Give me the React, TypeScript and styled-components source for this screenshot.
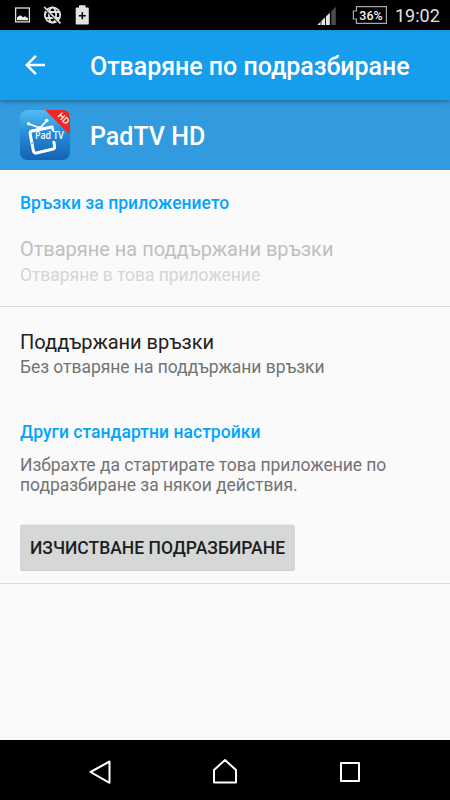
import React from "react";
import styled, { createGlobalStyle } from "styled-components";

const GlobalStyle = createGlobalStyle`
  * { box-sizing: border-box; }
  body { margin: 0; background: #fafafa; font-family: Roboto, "Noto Sans", sans-serif; }
`;

const Screen = styled.div`
  width: 450px;
  height: 800px;
  display: flex;
  flex-direction: column;
  background: #fafafa;
  overflow: hidden;
`;

const StatusBar = styled.header`
  height: 30px;
  flex: none;
  display: flex;
  justify-content: space-between;
  background: #000;
`;

const StatusGroup = styled.div`
  display: flex;
  height: 30px;
`;

const Clock = styled.time`
  width: 55px;
  font-size: 18px;
  line-height: 31px;
  color: #e2e2e2;
  white-space: nowrap;
`;

const AppBar = styled.div`
  height: 70px;
  flex: none;
  display: flex;
  align-items: center;
  gap: 40px;
  padding: 0 20px;
  background: #169dec;
  box-shadow: inset 0 1px 0 #1593dc, 0 1px 5px rgba(0, 0, 0, 0.4);
  z-index: 1;
`;

const BackButton = styled.button`
  display: flex;
  width: 30px;
  height: 30px;
  padding: 0;
  border: 0;
  background: none;
`;

const AppHeader = styled.div`
  height: 70px;
  flex: none;
  display: flex;
  align-items: center;
  gap: 20px;
  padding: 0 20px;
  background: #329bdf;
`;

const Heading = styled.h1<{ $spacing?: number }>`
  margin: 3px 0 0;
  font-size: 25px;
  line-height: 31px;
  font-weight: 500;
  letter-spacing: ${(p) => p.$spacing ?? 0}px;
  color: #fff;
  white-space: nowrap;
`;

const Content = styled.main`
  flex: 1;
`;

const SectionTitle = styled.h2<{ $top: number }>`
  margin: 0;
  padding: ${(p) => p.$top}px 20px 0;
  font-size: 17.5px;
  line-height: 20px;
  font-weight: 500;
  letter-spacing: 0.04px;
  color: #03a5fc;
`;

const Preference = styled.section<{ $disabled?: boolean; $height: number; $top: number }>`
  height: ${(p) => p.$height}px;
  padding: ${(p) => p.$top}px 20px 0;
  color: ${(p) => (p.$disabled ? "#bfbfbf" : "#212121")};
  border-bottom: ${(p) => (p.$disabled ? "1px solid #d9d9d9" : "0")};
`;

const PreferenceTitle = styled.h3`
  margin: 0;
  font-size: 20px;
  line-height: 29px;
  font-weight: 400;
  letter-spacing: -0.02px;
`;

const Summary = styled.p<{ $disabled?: boolean }>`
  margin: 0;
  font-size: 17.5px;
  line-height: ${(p) => (p.$disabled ? "22px" : "20px")};
  letter-spacing: -0.045px;
  color: ${(p) => (p.$disabled ? "#d5d5d5" : "#737373")};
`;

const Defaults = styled.section`
  height: 142px;
  padding: 13px 20px 0;
  border-bottom: 1px solid #dcdcdc;
`;

const ClearButton = styled.button`
  display: block;
  width: 275px;
  height: 46px;
  margin-top: 30px;
  padding: 0;
  border: 0;
  border-radius: 3px;
  background: #d6d8d7;
  box-shadow: 0 -0.5px 0 #d6d8d7, inset 0 -1px 0 #cbcdcc;
  color: #1d1e1e;
  font: 500 17.5px/46px Roboto, "Noto Sans", sans-serif;
  white-space: nowrap;
`;

const NavBar = styled.nav`
  height: 60px;
  flex: none;
  display: flex;
  align-items: center;
  justify-content: center;
  gap: 85px;
  padding-top: 4px;
  background: #000;
`;

const NavButton = styled.button`
  width: 40px;
  height: 40px;
  padding: 0;
  border: 0;
  background: none;
  display: block;
  svg { display: block; }
`;

const NotificationIcons = () => (
  <svg width="100" height="30" viewBox="0 0 100 30">
    <rect x="15.6" y="8" width="13.8" height="13.9" fill="none" stroke="#dedede" strokeWidth="1.3" />
    <path d="M17 20.2v-3l3.5-2 2.5 2 2-1 3 2v2z" fill="#ededed" />
    <g fill="none" stroke="#e0e0e0" strokeWidth="1.8">
      <circle cx="52.5" cy="15" r="7.7" />
      <ellipse cx="52.5" cy="15" rx="3.6" ry="7.7" />
      <path d="M45.5 12h14M45.5 18h14" />
    </g>
    <path d="M45 8.9L59.5 23.4" stroke="#000" strokeWidth="2" />
    <path d="M44.2 7L60.5 23.3" stroke="#e0e0e0" strokeWidth="1.7" />
    <path d="M76.5 7.5H79V5.2h6.5v2.3H88a.8.8 0 0 1 .8.8v15.4a.8.8 0 0 1-.8.8H76.5a.8.8 0 0 1-.8-.8V8.3a.8.8 0 0 1 .8-.8z" fill="#e2e2e2" />
    <path d="M82.3 12.2v7M78.8 15.7h7" stroke="#000" strokeWidth="1.6" />
  </svg>
);

const BatteryLabel = styled.text`
  font: 500 12.5px Roboto, sans-serif;
  fill: #f2f2f2;
`;

const SystemIcons = () => (
  <svg width="80" height="30" viewBox="315 0 80 30">
    <path d="M317.3 25l3.3-3.3V25zM321.4 25v-4.1l3.7-3.7V25zM326 25v-8.5l3.8-3.8V25z" fill="#e6e6e6" />
    <path d="M331.3 25V11.3l4.5-4.5V25z" fill="#4b4b4b" />
    <path d="M356.4 6.6h30v16.8h-30v-4.4h-3v-8h3z" fill="none" stroke="#a9a9a9" strokeWidth="1.2" />
    <BatteryLabel x="359.2" y="19.5" textLength="23.6">36%</BatteryLabel>
  </svg>
);

const LogoText = styled.text<{ $size: number }>`
  font: 600 ${(p) => p.$size}px "Open Sans", sans-serif;
  fill: #fff;
`;

const AppLogo = () => (
  <svg width="50" height="50" viewBox="0 0 50 50" overflow="visible">
    <defs>
      <linearGradient id="tile" x1="0" y1="0" x2="0" y2="1">
        <stop offset="0" stopColor="#50bdf2" />
        <stop offset=".5" stopColor="#2489d6" />
        <stop offset="1" stopColor="#1462b4" />
      </linearGradient>
    </defs>
    <rect width="50" height="50" rx="7.5" fill="url(#tile)" />
    <path d="M25 0H42.5Q50 0 50 7.5V25z" fill="#ed2827" />
    <g fill="none" stroke="#fff" strokeLinecap="round" strokeLinejoin="round">
      <path d="M8.6 13.8L20 18l6.8-7.4" strokeWidth="1.7" />
      <path d="M32 17L11.8 21Q9.8 21.6 10.2 24l3.2 17q.7 2.3 3 2L33 39q2-.7 1.6-2.8l-.7-4" strokeWidth="3" />
    </g>
    <circle cx="8.6" cy="13.8" r="1.7" fill="#fff" />
    <circle cx="26.8" cy="10.4" r="1.7" fill="#fff" />
    <path d="M15.5 19q3-4.5 8.5-2z" fill="#fff" />
    <path d="M32.2 17l.8 3.2" stroke="#fff" strokeWidth="2.4" strokeLinecap="round" />
    <circle cx="12.1" cy="33" r=".8" fill="#176fb5" />
    <LogoText $size={10} x="15" y="29.2" textLength="28.7" lengthAdjust="spacingAndGlyphs">Pad TV</LogoText>
    <LogoText $size={9} x="37" y="6.2" transform="rotate(45 37 6.2)" textLength="12.5" lengthAdjust="spacingAndGlyphs">HD</LogoText>
  </svg>
);

export default function App() {
  return (
    <Screen>
      <GlobalStyle />
      <StatusBar>
        <StatusGroup><NotificationIcons /></StatusGroup>
        <StatusGroup><SystemIcons /><Clock>19:02</Clock></StatusGroup>
      </StatusBar>
      <AppBar>
        <BackButton aria-label="Назад">
          <svg width="30" height="30" viewBox="0 0 24 24">
            <path d="M20 11H7.83l5.59-5.59L12 4l-8 8 8 8 1.41-1.41L7.83 13H20v-2z" fill="#fff" />
          </svg>
        </BackButton>
        <Heading $spacing={-0.03}>Отваряне по подразбиране</Heading>
      </AppBar>
      <AppHeader>
        <AppLogo />
        <Heading>PadTV HD</Heading>
      </AppHeader>
      <Content>
        <SectionTitle $top={23}>Връзки за приложението</SectionTitle>
        <Preference $disabled $height={94} $top={22}>
          <PreferenceTitle>Отваряне на поддържани връзки</PreferenceTitle>
          <Summary $disabled>Отваряне в това приложение</Summary>
        </Preference>
        <Preference $height={95} $top={21}>
          <PreferenceTitle>Поддържани връзки</PreferenceTitle>
          <Summary>Без отваряне на поддържани връзки</Summary>
        </Preference>
        <SectionTitle $top={20}>Други стандартни настройки</SectionTitle>
        <Defaults>
          <Summary>Избрахте да стартирате това приложение по<br />подразбиране за някои действия.</Summary>
          <ClearButton>ИЗЧИСТВАНЕ ПОДРАЗБИРАНЕ</ClearButton>
        </Defaults>
      </Content>
      <NavBar>
        <NavButton aria-label="Назад">
          <svg width="40" height="40" fill="none" stroke="#fff" strokeWidth="2" strokeLinejoin="round"><path d="M10.5 20L29.5 9.5v21.3z" /></svg>
        </NavButton>
        <NavButton aria-label="Начало">
          <svg width="40" height="40" fill="none" stroke="#fff" strokeWidth="2" strokeLinejoin="round"><path d="M9 18L20 8l11 10v12.5H9z" /></svg>
        </NavButton>
        <NavButton aria-label="Скорошни">
          <svg width="40" height="40" fill="none" stroke="#fff" strokeWidth="2" strokeLinejoin="round"><path d="M11 11h18v18H11z" /></svg>
        </NavButton>
      </NavBar>
    </Screen>
  );
}
